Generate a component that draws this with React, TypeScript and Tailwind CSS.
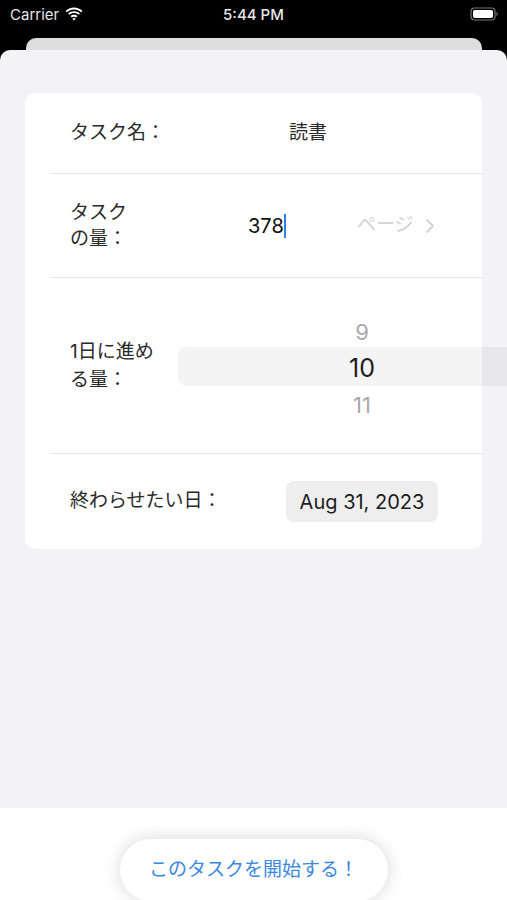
import React from "react";

const FONT = { fontFamily: 'Inter, "Noto Sans CJK JP", sans-serif' };

function StatusBar() {
  return (
    <div className="relative flex h-[28px] items-center justify-between px-[10px] text-white">
      <div className="flex items-center gap-[6px]">
        <span className="text-[15px] leading-none text-[#e6e6e6]">Carrier</span>
        <svg width="18" height="14" viewBox="0 0 17 13" fill="white">
          <path d="M8.5 2.2c2.6 0 5 1 6.8 2.7l1.2-1.3C14.4 1.6 11.6.4 8.5.4S2.6 1.6.5 3.6l1.2 1.3C3.5 3.2 5.9 2.2 8.5 2.2z" />
          <path d="M8.5 5.6c1.7 0 3.2.6 4.4 1.7l1.2-1.3C12.6 4.6 10.6 3.8 8.5 3.8S4.4 4.6 2.9 6l1.2 1.3c1.2-1.1 2.7-1.7 4.4-1.7z" />
          <path d="M8.5 9c.8 0 1.5.3 2 .8l1.3-1.3C11 7.7 9.8 7.2 8.5 7.2S6 7.7 5.2 8.5l1.3 1.3c.5-.5 1.2-.8 2-.8z" />
          <path d="M8.5 12.6l1.6-1.6c-.4-.4-1-.7-1.6-.7s-1.2.3-1.6.7z" />
        </svg>
      </div>
      <span className="absolute left-1/2 -translate-x-1/2 text-[15px] font-medium leading-none text-[#e6e6e6]">
        5:44 PM
      </span>
      <svg width="29" height="14" viewBox="0 0 29 14" className="mr-[-2px]">
        <rect x="1" y="1" width="24" height="12" rx="3.5" fill="none" stroke="#777" strokeWidth="1.2" />
        <rect x="3" y="3" width="20" height="8" rx="1.8" fill="white" />
        <path d="M26.5 5v4c.8-.3 1.3-1.1 1.3-2s-.5-1.7-1.3-2z" fill="#777" />
      </svg>
    </div>
  );
}

function Divider() {
  return <div className="ml-[25px] h-px bg-[#e6e6ea]" />;
}

export default function App() {
  return (
    <div className="relative h-[900px] w-[507px] overflow-hidden bg-black" style={FONT}>
      <StatusBar />

      {/* previous screen peeking behind the sheet */}
      <div className="mx-[26px] mt-[10px] h-[12px] w-[456px] rounded-t-[10px] bg-[#dedede]" />

      {/* sheet */}
      <div className="flex h-[850px] flex-col overflow-hidden rounded-t-[10px] bg-[#f2f2f7]">
        <div className="flex-1 pt-[43px]">
          <div className="ml-[25px] mr-[25px] rounded-[10px] bg-white text-[19px] text-[#2a2a2a]">
            {/* task name */}
            <div className="flex h-[80px] items-center pl-[45px]">
              <span className="w-[219px]">タスク名：</span>
              <span>読書</span>
            </div>
            <Divider />

            {/* task amount */}
            <div className="flex h-[103px] items-center pl-[45px]">
              <span className="w-[178px] leading-[26px]">
                タスク
                <br />
                の量：
              </span>
              <div className="flex w-[109px] items-center">
                <span className="text-[20px] text-[#111]">378</span>
                <span className="h-[24px] w-[2px] bg-[#2f7ee6]" />
              </div>
              <span className="text-[19px] text-[#d2d2d6]">ページ</span>
              <svg width="12" height="16" viewBox="0 0 12 16" className="ml-[10px]">
                <path d="M3 2l6 6-6 6" fill="none" stroke="#d2d2d6" strokeWidth="1.8" strokeLinecap="round" strokeLinejoin="round" />
              </svg>
            </div>
            <Divider />

            {/* amount per day */}
            <div className="flex h-[175px] items-center pl-[45px]">
              <span className="w-[108px] shrink-0 leading-[28px]">
                1日に進め
                <br />
                る量：
              </span>
              <div className="relative mt-[5px] w-[368px] shrink-0">
                <div className="absolute left-0 right-0 top-[33px] h-[39px] rounded-l-[8px] bg-black/[0.045]" />
                <div className="relative flex flex-col items-center">
                  <span className="h-[36px] text-[22px] leading-[36px] text-[#a9a9ad]">9</span>
                  <span className="h-[37px] text-[25px] leading-[37px] text-[#1c1c1e]">10</span>
                  <span className="h-[36px] text-[22px] leading-[36px] text-[#a9a9ad]">11</span>
                </div>
              </div>
            </div>
            <Divider />

            {/* deadline */}
            <div className="flex h-[95px] items-center pl-[45px]">
              <span className="w-[216px]">終わらせたい日：</span>
              <span className="flex h-[41px] w-[152px] items-center justify-center rounded-[8px] bg-[#eeeeef] text-[20px] text-[#1c1c1e]">
                Aug 31, 2023
              </span>
            </div>
          </div>
        </div>

        {/* bottom action area */}
        <div className="flex h-[92px] justify-center bg-white pt-[31px]">
          <button className="h-[62px] w-[268px] rounded-full bg-white text-[19px] text-[#3b87e4] shadow-[0_0_18px_rgba(0,0,0,0.16)]">
            このタスクを開始する！
          </button>
        </div>
      </div>
    </div>
  );
}
